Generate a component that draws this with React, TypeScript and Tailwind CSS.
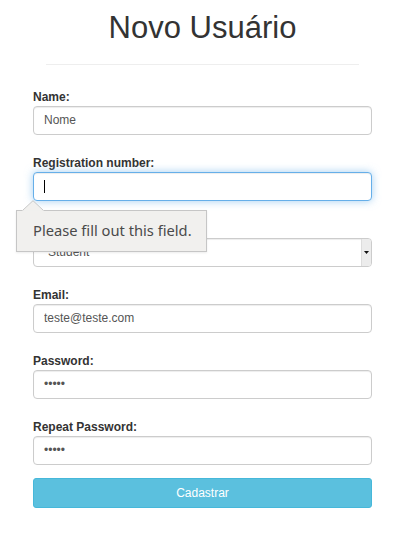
import React from "react";

const labelCls =
  "block text-[12px] leading-[17px] font-bold text-[#333] pt-[1px] h-[18px]";
const inputCls =
  "block w-full h-[29px] rounded-[4px] border border-[#ccc] bg-white pl-[10px] pr-[10px] pb-[2px] text-[12px] text-[#555] outline-none shadow-[inset_0_1px_1px_rgba(0,0,0,0.075)]";

function Group({ label, children }: { label: string; children: React.ReactNode }) {
  return (
    <div className="mb-[19px]">
      <label className={labelCls}>{label}</label>
      {children}
    </div>
  );
}

export default function App() {
  return (
    <div
      className="relative w-[420px] h-[554px] bg-white overflow-hidden"
      style={{ fontFamily: '"Liberation Sans", Arial, sans-serif' }}
    >
      <h1 className="pt-[11px] text-center text-[31px] leading-[34px] font-normal text-[#333] ml-[33px] w-[339px]">
        Novo Usuário
      </h1>
      <div className="mt-[19px] ml-[46px] w-[313px] h-px bg-[#eee]" />
      <form className="mt-[23px] ml-[33px] w-[339px]">
        <Group label="Name:">
          <input className={inputCls} defaultValue="Nome" />
        </Group>
        <Group label="Registration number:">
          <div className="relative">
            <input
              className="block w-full h-[29px] rounded-[4px] border border-[#66afe9] bg-white pl-[10px] text-[12px] text-[#555] outline-none shadow-[inset_0_1px_1px_rgba(0,0,0,0.075),0_0_8px_rgba(102,175,233,0.6)]"
              defaultValue=""
            />
            <div className="absolute left-[11px] top-[8px] w-px h-[13px] bg-black" />
          </div>
        </Group>
        <Group label="Type:">
          <div className="relative h-[29px] rounded-[4px] border border-[#ccc] bg-white shadow-[inset_0_1px_1px_rgba(0,0,0,0.075)] flex items-center">
            <span className="pl-[14px] pb-[2px] text-[12px] text-[#555]">Student</span>
            <div className="absolute right-0 top-0 bottom-0 w-[10px] bg-[#ececec] border-l border-[#ddd] rounded-r-[3px] flex items-center justify-center">
              <svg width="5" height="3" viewBox="0 0 5 3">
                <polygon points="0,0 5,0 2.5,3" fill="#111" />
              </svg>
            </div>
          </div>
        </Group>
        <Group label="Email:">
          <input className={inputCls} defaultValue="teste@teste.com" />
        </Group>
        <Group label="Password:">
          <input className={inputCls} type="password" defaultValue="12345" />
        </Group>
        <div className="mb-[13px]">
          <label className={labelCls}>Repeat Password:</label>
          <input className={inputCls} type="password" defaultValue="12345" />
        </div>
        <button
          type="button"
          className="block w-full h-[30px] rounded-[3px] border border-[#46b8da] bg-[#5bc0de] text-white text-[12px]"
        >
          Cadastrar
        </button>
      </form>

      {/* validation bubble */}
      <div className="absolute left-[16px] top-[210px] w-[191px] h-[42px] bg-[#f1f0ee] border border-[#c6c6c6] shadow-[0_1px_2px_rgba(0,0,0,0.08)]">
        <div
          className="absolute left-[16px] top-[9px] text-[14.7px] leading-[20px] text-[#4a4a4a] whitespace-nowrap"
          style={{ fontFamily: '"Noto Sans", "Open Sans", sans-serif' }}
        >
          Please fill out this field.
        </div>
      </div>
      <svg
        className="absolute left-[22px] top-[200px]"
        width="22"
        height="12"
        viewBox="0 0 22 12"
      >
        <polygon points="0.5,11 11,0.7 21.5,11" fill="#f1f0ee" />
        <polyline points="0.5,10.5 11,0.7 21.5,10.5" fill="none" stroke="#c6c6c6" strokeWidth="1" />
        <rect x="0" y="10.6" width="22" height="2" fill="#f1f0ee" />
      </svg>
    </div>
  );
}
